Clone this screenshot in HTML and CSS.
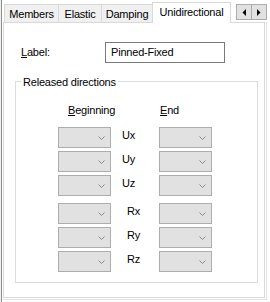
FILE: index.html
```html
<!DOCTYPE html>
<html lang="en">

<head>
    <meta charset="UTF-8">
    <title>Unidirectional</title>
    <link rel="stylesheet" href="styles.css">
</head>

<body>
    <div class="window">
        <div class="tabstrip">
            <div class="tab t-members">Members</div>
            <div class="tab t-elastic">Elastic</div>
            <div class="tab t-damping">Damping</div>
            <div class="tab active t-uni">Unidirectional</div>
            <div class="scroller">
                <span class="sbtn"><svg width="4" height="7" viewBox="0 0 4 7"><polygon points="4,0 4,7 0.5,3.5" fill="#000"/></svg></span>
                <span class="sbtn sbtn-r"><svg width="4" height="7" viewBox="0 0 4 7"><polygon points="0,0 0,7 3.5,3.5" fill="#000"/></svg></span>
            </div>
        </div>
        <div class="panel-wrap">
            <div class="panel">
                <div class="field-row">
                    <label class="field-label"><u>L</u>abel:</label>
                    <div class="textbox">Pinned-Fixed</div>
                </div>
                <div class="group">
                    <div class="group-title">Released directions</div>
                    <div class="cols hdr">
                        <div class="hdr-begin"><u>B</u>eginning</div>
                        <div></div>
                        <div class="hdr-end"><u>E</u>nd</div>
                    </div>
                    <div class="cols rows" id="urows"></div>
                    <div class="cols rows r-block" id="rrows"></div>
                </div>
            </div>
        </div>
    </div>
    <script>
        var chev = '<svg width="7" height="4" viewBox="0 0 7 4"><polyline points="0.5,0.5 3.5,3.5 6.5,0.5" fill="none" stroke="#8a8a8a" stroke-width="1"/></svg>';
        function makeRows(el, names, cls) {
            var html = '';
            for (var i = 0; i < names.length; i++) {
                html += '<div class="combo">' + chev + '</div>'
                html += '<div class="lbl ' + cls + '">' + names[i] + '</div>'
                html += '<div class="combo">' + chev + '</div>'
            }
            el.innerHTML = html;
        }
        makeRows(document.getElementById('urows'), ['Ux', 'Uy', 'Uz'], 'lbl-u');
        makeRows(document.getElementById('rrows'), ['Rx', 'Ry', 'Rz'], 'lbl-r');
    </script>
</body>

</html>
```

FILE: styles.css
```css
* {
    margin: 0;
    padding: 0;
    box-sizing: border-box;
}

body {
    background: #f0f0f0;
    font-family: "Liberation Sans", Arial, sans-serif;
    font-size: 11px;
    letter-spacing: -0.2px;
    color: #000;
    width: 270px;
    height: 302px;
    overflow: hidden;
}

.window {
    margin-left: 1px;
    border-left: 1px solid #8c8c8c;
    background: #fff;
    height: 302px;
}

/* tabs */
.tabstrip {
    display: flex;
    align-items: flex-end;
    height: 22px;
    padding-left: 2px;
}

.tab {
    height: 18px;
    padding-top: 2px;
    line-height: 14px;
    text-align: center;
    background: #f0f0f0;
    border-top: 1px solid #d9d9d9;
    border-left: 1px solid #d9d9d9;
}

.t-members {
    width: 54px;
}

.t-elastic {
    width: 43px;
}

.t-damping {
    width: 51px;
}

.t-uni {
    width: 79px;
}

.tab.active {
    position: relative;
    z-index: 1;
    height: 21px;
    margin-bottom: -1px;
    background: #fff;
    border-right: 1px solid #d9d9d9;
}

.scroller {
    display: flex;
    align-self: flex-start;
    margin: 4px 3px 0 auto;
}

.sbtn {
    display: flex;
    align-items: center;
    justify-content: center;
    width: 16px;
    height: 16px;
    background: #e1e1e1;
    border: 1px solid #adadad;
}

.sbtn-r {
    border-left: none;
    width: 15px;
}

/* page */
.panel-wrap {
    margin-left: 1px;
    width: 264px;
    padding-right: 1px;
    padding-bottom: 1px;
    border-right: 1px solid #e3e3e3;
    border-bottom: 1px solid #e3e3e3;
}

.panel {
    width: 262px;
    height: 276px;
    border: 1px solid #d9d9d9;
    background: #fff;
}

.field-row {
    display: flex;
    margin-top: 19px;
    padding-left: 17px;
}

.field-label {
    width: 84px;
    line-height: 21px;
}

.textbox {
    width: 120px;
    height: 21px;
    border: 1px solid #7a7a7a;
    padding-left: 5px;
    line-height: 19px;
}

.group {
    margin: 18px 0 0 11px;
    width: 243px;
    height: 202px;
    border: 1px solid #dcdcdc;
}

.group-title {
    width: max-content;
    margin: -7px 0 0 5px;
    padding: 0 2px;
    line-height: 14px;
    background: #fff;
}

.cols {
    display: grid;
    grid-template-columns: 53px 48px 53px;
    padding-left: 42px;
}

.hdr {
    margin-top: 14px;
    margin-bottom: 10px;
    line-height: 14px;
}

.hdr-begin {
    padding-left: 10px;
}

.hdr-end {
    padding-left: 1px;
}

.rows {
    grid-auto-rows: 21px;
    row-gap: 3px;
}

.r-block {
    margin-top: 7px;
}

.combo {
    display: flex;
    align-items: center;
    justify-content: flex-end;
    padding-right: 5px;
    background: #e1e1e1;
    border: 1px solid #adadad;
}

.combo svg {
    display: block;
}

.lbl {
    line-height: 17px;
}

.lbl-u {
    padding-left: 11px;
}

.lbl-r {
    padding-left: 16px;
}
```
